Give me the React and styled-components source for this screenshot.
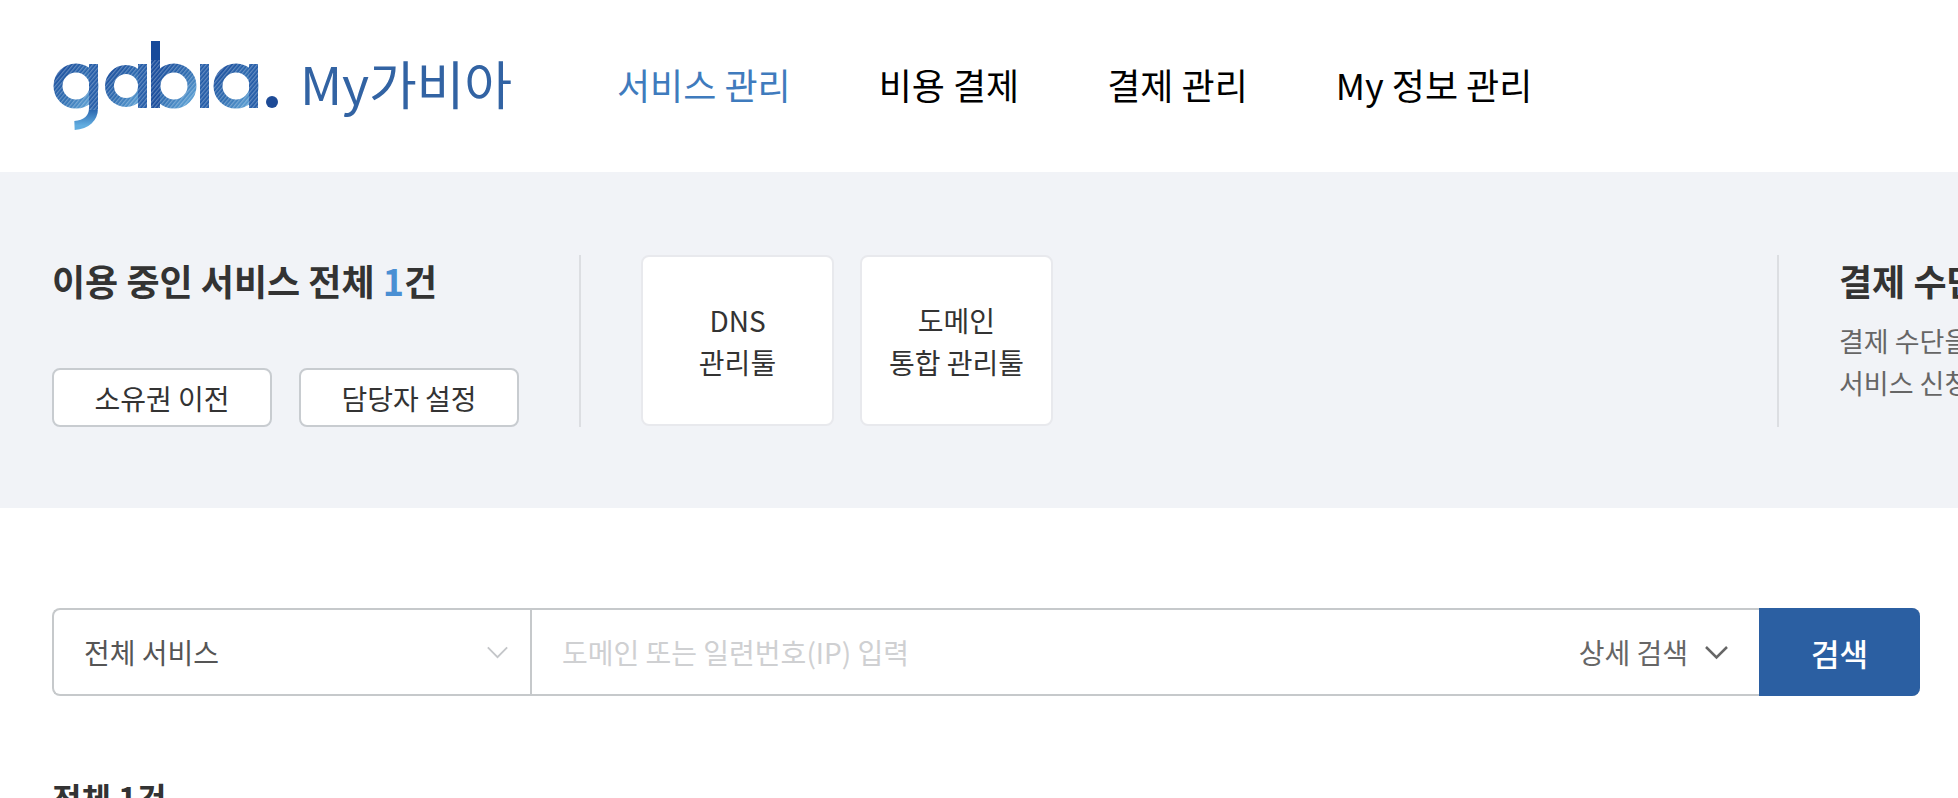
import React from "react";
import styled, { createGlobalStyle } from "styled-components";

const GlobalStyle = createGlobalStyle`
  html, body {
    margin: 0;
    height: 798px;
    overflow: hidden;
    background: #fff;
  }
  * { box-sizing: border-box; }
  body {
    font-family: "Noto Sans CJK KR", "Noto Sans", sans-serif;
    color: #333;
  }
`;

const Page = styled.div`
  width: 1958px;
  height: 798px;
  overflow: hidden;
`;

const Header = styled.header`
  height: 172px;
  display: flex;
  align-items: center;
  padding-left: 50px;
`;

const LogoBox = styled.div`
  width: 232px;
  height: 92px;
  flex: none;
`;

const ServiceName = styled.div`
  margin: -6px 0 0 18px;
  width: 318px;
  flex: none;
  font-size: 52px;
  line-height: 1;
  letter-spacing: -0.2px;
  color: #3263a3;
`;

const Nav = styled.nav`
  display: flex;
  gap: 88px;
  margin: -5px 0 0 -1px;
`;

const NavItem = styled.a`
  font-size: 36px;
  line-height: 1;
  color: ${(p) => (p.$active ? "#3f7bbd" : "#000")};
`;

const Band = styled.section`
  height: 336px;
  background: #f1f3f7;
  padding: 83px 0 0 52px;
  display: flex;
  align-items: flex-start;
`;

const Summary = styled.div`
  width: 527px;
  height: 172px;
  flex: none;
  display: flex;
  flex-direction: column;
  justify-content: space-between;
`;

const SummaryTitle = styled.h2`
  margin: -2px 0 0;
  font-size: 36px;
  line-height: 54px;
  font-weight: 700;
  color: #333;
`;

const Count = styled.span`
  color: #4a8fd3;
`;

const ButtonRow = styled.div`
  display: flex;
  gap: 27px;
`;

const OutlineButton = styled.button`
  width: 220px;
  height: 59px;
  padding: 0;
  background: #fff;
  border: 2px solid #c8ccd0;
  border-radius: 8px;
  font: inherit;
  font-size: 28px;
  color: #333;
`;

const Divider = styled.div`
  width: 2px;
  height: 172px;
  flex: none;
  background: #dcdee2;
`;

const Tools = styled.div`
  width: 1196px;
  flex: none;
  padding-left: 60px;
  display: flex;
  gap: 26px;
`;

const ToolCard = styled.a`
  width: 193px;
  height: 171px;
  display: flex;
  align-items: center;
  justify-content: center;
  text-align: center;
  background: #fff;
  border: 2px solid #e8e9ed;
  border-radius: 8px;
  font-size: 28px;
  line-height: 42px;
  color: #333;
`;

const PayInfo = styled.div`
  margin-top: -2px;
  padding-left: 60px;
  flex: none;
  width: 600px;
`;

const PayTitle = styled.h2`
  margin: 0 0 13px;
  font-size: 36px;
  line-height: 54px;
  font-weight: 700;
  color: #333;
`;

const PayText = styled.p`
  margin: 0;
  font-size: 27px;
  line-height: 42px;
  color: #666;
`;

const SearchSection = styled.section`
  padding: 100px 38px 0 52px;
`;

const SearchBar = styled.div`
  height: 88px;
  display: flex;
  border: 2px solid #c6c9cb;
  border-right: none;
  border-radius: 8px;
  background: #fff;
`;

const ServiceSelect = styled.div`
  width: 478px;
  flex: none;
  display: flex;
  align-items: center;
  justify-content: space-between;
  padding: 0 21px 0 30px;
  border-right: 2px solid #c6c9cb;
  font-size: 28px;
  color: #555;
`;

const SearchField = styled.div`
  flex: 1;
  display: flex;
  align-items: center;
  justify-content: space-between;
  padding: 0 30px;
  font-size: 28px;
`;

const Placeholder = styled.span`
  color: #cfd0d2;
`;

const DetailToggle = styled.span`
  display: flex;
  align-items: center;
  gap: 16px;
  color: #666;
`;

const SearchButton = styled.button`
  width: 161px;
  height: 88px;
  margin: -2px 0 0;
  flex: none;
  padding: 0;
  border: none;
  border-radius: 0 8px 8px 0;
  background: #2b5fa2;
  font: inherit;
  font-size: 31px;
  font-weight: 500;
  color: #fff;
`;

const TotalTitle = styled.h3`
  margin: 79px 0 0;
  font-size: 32px;
  line-height: 44px;
  font-weight: 700;
  color: #333;
`;

const Chevron = ({ color, size = 25, width = 2 }) => (
  <svg width={size} height="15" viewBox="0 0 25 15" fill="none">
    <path d="M2 2l10.500 10.500L23 2" stroke={color} strokeWidth={width} />
  </svg>
);

// gabia wordmark: rings and bars with a fine hatch over them
const GabiaLogo = () => (
  <svg width="232" height="92" viewBox="0 0 232 92">
    <defs>
      <linearGradient id="hook" x1="0" y1="0" x2="0" y2="1">
        <stop offset="0" stopColor="#1f57a3" />
        <stop offset="1" stopColor="#62ade0" />
      </linearGradient>
      <linearGradient id="ring" x1="0" y1="0" x2="1" y2="1">
        <stop offset="0" stopColor="#164a9a" />
        <stop offset="0.55" stopColor="#2c6cb0" />
        <stop offset="1" stopColor="#5fa5d8" />
      </linearGradient>
      <pattern id="hatch" width="3" height="3" patternUnits="userSpaceOnUse" patternTransform="rotate(40)">
        <rect width="3" height="3" fill="#fff" />
        <rect width="1.300" height="3" fill="#000" />
      </pattern>
      <mask id="hatchMask" maskUnits="userSpaceOnUse" x="0" y="0" width="232" height="92">
        <rect width="232" height="92" fill="#fff" />
        <rect x="0" y="20" width="215" height="50" fill="url(#hatch)" opacity="0.3" />
      </mask>
    </defs>
    <g mask="url(#hatchMask)" fill="none" strokeWidth="9">
      <g stroke="url(#ring)">
        <circle cx="26" cy="46" r="18" />
        <circle cx="76" cy="46" r="16.500" />
        <circle cx="124" cy="46" r="18" />
        <circle cx="186" cy="46" r="18" />
      </g>
      <g fill="#215aa6">
        <rect x="39" y="24" width="9" height="44" />
        <rect x="88" y="24" width="9" height="44" />
        <rect x="150" y="24" width="9" height="44" />
        <rect x="199" y="24" width="9" height="44" />
      </g>
      <rect x="101" y="1" width="9" height="67" fill="#164a9a" />
      <path d="M43.500 66v2c0 10-7 17-19 17.500" stroke="url(#hook)" />
    </g>
    <circle cx="222" cy="62" r="6" fill="#1d4a96" />
  </svg>
);

const App = () => {
  return (
    <Page>
      <GlobalStyle />
      <Header>
        <LogoBox>
          <GabiaLogo />
        </LogoBox>
        <ServiceName>My가비아</ServiceName>
        <Nav>
          <NavItem $active>서비스 관리</NavItem>
          <NavItem>비용 결제</NavItem>
          <NavItem>결제 관리</NavItem>
          <NavItem>My 정보 관리</NavItem>
        </Nav>
      </Header>
      <Band>
        <Summary>
          <SummaryTitle>
            이용 중인 서비스 전체 <Count>1</Count>건
          </SummaryTitle>
          <ButtonRow>
            <OutlineButton>소유권 이전</OutlineButton>
            <OutlineButton>담당자 설정</OutlineButton>
          </ButtonRow>
        </Summary>
        <Divider />
        <Tools>
          <ToolCard>
            DNS
            <br />
            관리툴
          </ToolCard>
          <ToolCard>
            도메인
            <br />
            통합 관리툴
          </ToolCard>
        </Tools>
        <Divider />
        <PayInfo>
          <PayTitle>결제 수단 관리</PayTitle>
          <PayText>
            결제 수단을 등록하면
            <br />
            서비스 신청이 편리합니다
          </PayText>
        </PayInfo>
      </Band>
      <SearchSection>
        <SearchBar>
          <ServiceSelect>
            전체 서비스
            <Chevron color="#c4c6c9" size={23} />
          </ServiceSelect>
          <SearchField>
            <Placeholder>도메인 또는 일련번호(IP) 입력</Placeholder>
            <DetailToggle>
              상세 검색
              <Chevron color="#666" width={2.5} />
            </DetailToggle>
          </SearchField>
          <SearchButton>검색</SearchButton>
        </SearchBar>
        <TotalTitle>전체 1건</TotalTitle>
      </SearchSection>
    </Page>
  );
};

export default App;
